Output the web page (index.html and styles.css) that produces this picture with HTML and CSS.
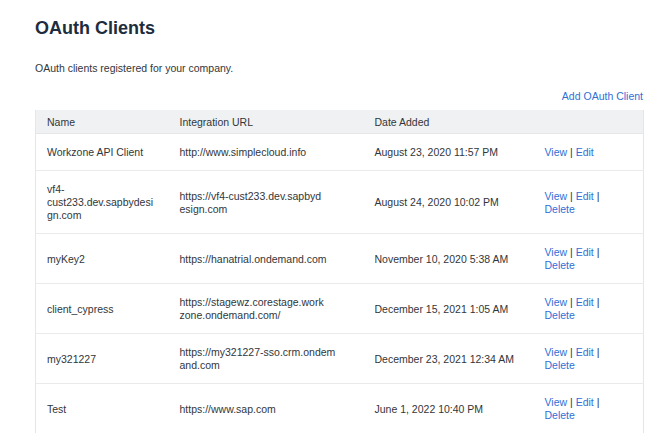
FILE: index.html
```html
<!DOCTYPE html>
<html lang="en">
<head>
<meta charset="utf-8">
<title>OAuth Clients</title>
<link rel="stylesheet" href="styles.css">
</head>
<body>
<div class="page">
  <h1 class="title">OAuth Clients</h1>
  <p class="subtitle">OAuth clients registered for your company.</p>
  <div class="toolbar"><a class="link" href="#">Add OAuth Client</a></div>
  <table class="grid">
    <colgroup>
      <col class="c-name"><col class="c-url"><col class="c-date"><col class="c-act">
    </colgroup>
    <thead>
      <tr><th>Name</th><th>Integration URL</th><th>Date Added</th><th></th></tr>
    </thead>
    <tbody>
      <tr>
        <td class="name">Workzone API Client</td>
        <td class="url">http://www.simplecloud.info</td>
        <td>August 23, 2020 11:57 PM</td>
        <td class="act"><a class="link" href="#">View</a> | <a class="link" href="#">Edit</a></td>
      </tr>
      <tr>
        <td class="name">vf4-cust233.dev.sapbydesign.com</td>
        <td class="url">https://vf4-cust233.dev.sapbyd<wbr>esign.com</td>
        <td>August 24, 2020 10:02 PM</td>
        <td class="act"><a class="link" href="#">View</a> | <a class="link" href="#">Edit</a> | <a class="link" href="#">Delete</a></td>
      </tr>
      <tr>
        <td class="name">myKey2</td>
        <td class="url">https://hanatrial.ondemand.com</td>
        <td>November 10, 2020 5:38 AM</td>
        <td class="act"><a class="link" href="#">View</a> | <a class="link" href="#">Edit</a> | <a class="link" href="#">Delete</a></td>
      </tr>
      <tr>
        <td class="name">client_cypress</td>
        <td class="url">https://stagewz.corestage.work<wbr>zone.ondemand.com/</td>
        <td>December 15, 2021 1:05 AM</td>
        <td class="act"><a class="link" href="#">View</a> | <a class="link" href="#">Edit</a> | <a class="link" href="#">Delete</a></td>
      </tr>
      <tr>
        <td class="name">my321227</td>
        <td class="url">https://my321227-sso.crm.ondem<wbr>and.com</td>
        <td>December 23, 2021 12:34 AM</td>
        <td class="act"><a class="link" href="#">View</a> | <a class="link" href="#">Edit</a> | <a class="link" href="#">Delete</a></td>
      </tr>
      <tr>
        <td class="name">Test</td>
        <td class="url">https://www.sap.com</td>
        <td>June 1, 2022 10:40 PM</td>
        <td class="act"><a class="link" href="#">View</a> | <a class="link" href="#">Edit</a> | <a class="link" href="#">Delete</a></td>
      </tr>
    </tbody>
  </table>
</div>
</body>
</html>
```
FILE: styles.css
```css
html, body {
  margin: 0;
  padding: 0;
  background: #ffffff;
}
body {
  font-family: "Liberation Sans", Arial, sans-serif;
  font-size: 10.5px;
  color: #32363a;
}
.page {
  padding: 17px 7px 0 35px;
}
.title {
  margin: 0;
  font-size: 18px;
  line-height: 22px;
  font-weight: bold;
  color: #1d2d3e;
}
.subtitle {
  margin: 23px 0 0 0;
  line-height: 13px;
  font-size: 10.5px;
}
.toolbar {
  display: flex;
  justify-content: flex-end;
  margin-top: 15px;
  line-height: 13px;
  font-size: 10.5px;
}
.link {
  color: #2f6fd6;
  text-decoration: none;
}
.grid {
  margin-top: 7px;
  width: 608px;
  border-collapse: collapse;
  table-layout: fixed;
  border-left: 1px solid #e4e6e8;
  border-right: 1px solid #e4e6e8;
}
.c-name { width: 133px; }
.c-url { width: 195px; }
.c-date { width: 170px; }
.c-act { width: 110px; }
.grid th {
  background: #eff1f2;
  text-align: left;
  font-weight: normal;
  padding: 6px 11px 4px 11px;
  line-height: 13px;
  border-bottom: 1px solid #e4e6e8;
  color: #32363a;
}
.grid td {
  padding: 12px 11px 11px 11px;
  line-height: 13px;
  vertical-align: middle;
  border-bottom: 1px solid #e8eaeb;
}
.grid td.name {
  overflow-wrap: break-word;
}
.grid td.url {
  overflow-wrap: anywhere;
  padding-right: 18px;
}
.grid td.act {
  padding-right: 30px;
}
```
